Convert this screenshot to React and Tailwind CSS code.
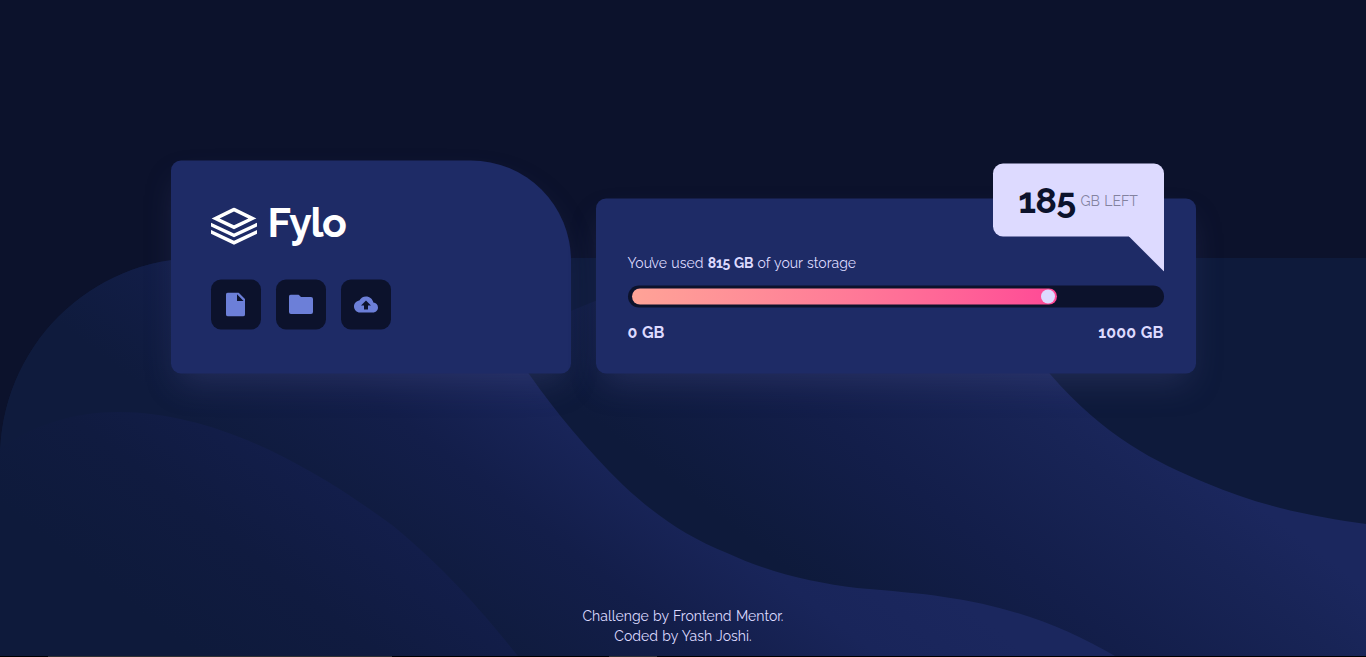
import React from "react";

const FONT = "font-[Raleway,Lato,sans-serif]";

function Backdrop() {
  return (
    <svg className="absolute inset-0 h-[656px] w-[1366px]" viewBox="0 0 1366 656" fill="none" aria-hidden="true">
      <defs>
        <linearGradient id="left" gradientUnits="userSpaceOnUse" x1="-244" y1="316" x2="-107" y2="138">
          <stop offset="0" stopColor="#0e1a3b" />
          <stop offset="0.5" stopColor="#101b40" />
          <stop offset="1" stopColor="#131e4b" />
        </linearGradient>
        <linearGradient id="middle" gradientUnits="userSpaceOnUse" x1="-134" y1="174" x2="67" y2="-87">
          <stop offset="0" stopColor="#0f1b3d" />
          <stop offset="0.4" stopColor="#131e4a" />
          <stop offset="0.72" stopColor="#19255a" />
          <stop offset="1" stopColor="#1b275e" />
        </linearGradient>
        <linearGradient id="right" gradientUnits="userSpaceOnUse" x1="18.3" y1="-23.7" x2="225.7" y2="-292.3">
          <stop offset="0" stopColor="#0e1a3b" />
          <stop offset="0.42" stopColor="#131e4a" />
          <stop offset="0.8" stopColor="#182456" />
          <stop offset="1" stopColor="#1b275e" />
        </linearGradient>
      </defs>
      <path d="M0 656V458A200 200 0 0 1 200 258H1366V656Z" fill="#0e1a3b" />
      <path d="M700 258H985C1000 305 1025 345 1050 374C1105 437 1155 462 1206 483C1262 507 1315 517 1366 524V656H640L500 340Z" fill="url(#right)" />
      <path d="M0 656V458A200 200 0 0 1 200 258H470C486 300 505 340 529 374C555 411 587 450 623 485C655 515 687 537 727 553C770 573 815 583 857 588C890 591 920 593 944 597C1010 606 1065 627 1115 656Z" fill="url(#middle)" />
      <path d="M0 448C35 424 75 412 118 412C215 412 310 465 392 525C447 570 484 614 518 656H0Z" fill="url(#left)" />
    </svg>
  );
}

function Logo() {
  return (
    <div className="flex h-[38px] items-start text-white">
      <svg className="mt-[1px] h-[38px] w-[46px] shrink-0" viewBox="0 0 46 38" fill="currentColor">
        <path fillRule="evenodd" d="M23 0L45.4 10.9L23 21.8L0.6 10.9ZM23 4.1L8.6 10.9L23 17.7L37.4 10.9Z" />
        <path d="M0 15.2L23 25.9L46 15.2V19L23 29.8L0 19Z" />
        <path d="M0 22.5L23 33.3L46 22.5V26.3L23 37.2L0 26.3Z" />
      </svg>
      <span className="ml-[11px] -mt-[5px] text-[41px] font-bold leading-[42px] tracking-[-1.4px]">Fylo</span>
    </div>
  );
}

function IconButton({ children }) {
  return (
    <button className="flex size-[50px] items-center justify-center rounded-[10px] bg-[#0c122c] text-[#6c7fd8]">
      {children}
    </button>
  );
}

export default function App() {
  return (
    <div className={`relative flex h-[657px] w-[1366px] flex-col overflow-hidden bg-[#0c122c] text-[#dddaff] [word-spacing:0.8px] ${FONT}`}>
      <Backdrop />
      <main className="relative flex h-[374px] -translate-y-[0.5px] items-end justify-center gap-[25px]">
        <section className="flex h-[213px] w-[400px] flex-col rounded-[10px] rounded-tr-[100px] bg-[#1e2b66] px-10 pt-[46px] shadow-[0_16px_32px_-8px_rgba(72,80,135,0.34)]">
          <Logo />
          <div className="mt-[35px] flex gap-[15px]">
            <IconButton>
              <svg className="h-6 w-[19px]" viewBox="0 0 19 24" fill="currentColor">
                <path fillRule="evenodd" d="M2 0H12.5L19 6.5V22A2 2 0 0 1 17 24H2A2 2 0 0 1 0 22V2A2 2 0 0 1 2 0ZM11 1.8V8.5H17.6Z" />
              </svg>
            </IconButton>
            <IconButton>
              <svg className="h-5 w-6" viewBox="0 0 24 20" fill="currentColor">
                <path d="M2 0H9.5L12 2.5H22A2 2 0 0 1 24 4.5V17.5A2 2 0 0 1 22 19.5H2A2 2 0 0 1 0 17.5V2A2 2 0 0 1 2 0Z" />
              </svg>
            </IconButton>
            <IconButton>
              <svg className="h-6 w-6" viewBox="0 0 24 24" fill="currentColor">
                <path d="M19.35 10.04C18.67 6.59 15.64 4 12 4 9.11 4 6.6 5.64 5.35 8.04 2.34 8.36 0 10.91 0 14c0 3.31 2.69 6 6 6h13c2.76 0 5-2.24 5-5 0-2.64-2.05-4.78-4.65-4.96zM14 13v4h-4v-4H7l5-5 5 5h-3z" />
              </svg>
            </IconButton>
          </div>
        </section>

        <section className="relative flex h-[175px] w-[600px] flex-col rounded-[10px] bg-[#1e2b66] px-8 pt-[54px] shadow-[0_16px_32px_-8px_rgba(72,80,135,0.34)]">
          <p className="h-5 whitespace-nowrap text-[14px] leading-5">
            Yo<span className="tracking-[-1.6px]">u'</span>ve used <b className="font-bold tracking-[-0.25px]">815 GB</b> of your storage
          </p>
          <div className="mt-[13px] flex h-[22px] rounded-[11px] bg-[#0c122c] px-1 py-[3px]">
            <div className="flex h-4 w-[425px] items-center justify-end rounded-[8px] bg-linear-to-r from-[#ffa397] to-[#ff4896] pr-[2px]">
              <span className="size-[14px] rounded-full bg-[#dddaff]" />
            </div>
          </div>
          <div className="mt-[15px] flex justify-between text-[16px] font-bold leading-5">
            <span>0 GB</span>
            <span className="tracking-[0.1px]">1000 GB</span>
          </div>

          <div className="absolute -top-[35px] right-8 flex h-[73px] w-[171px] items-center justify-center gap-[5px] rounded-[10px] rounded-br-none bg-[#dddaff]">
            <span className="pb-[2px] text-[36px] font-bold leading-none tracking-[-0.7px] text-[#0c122c]">185</span>
            <span className="whitespace-nowrap pt-[2px] text-[14px] text-[#83829f]">GB LEFT</span>
            <svg className="absolute right-0 top-[72px] h-9 w-[35px]" viewBox="0 0 35 36" fill="#dddaff">
              <path d="M0 1V0H35V36L0 1Z" />
            </svg>
          </div>
        </section>
      </main>

      <footer className="relative mt-[232px] h-[50px] text-center text-[14px] leading-5">
        <p>Challenge by Frontend Mentor.</p>
        <p>Coded by Yash Joshi.</p>
      </footer>
      <div className="relative flex h-px shrink-0 bg-black">
        <div className="ml-12 h-px w-[344px] bg-[#333333]" />
        <div className="ml-[217px] h-px w-12 bg-[#333333]" />
      </div>
    </div>
  );
}
